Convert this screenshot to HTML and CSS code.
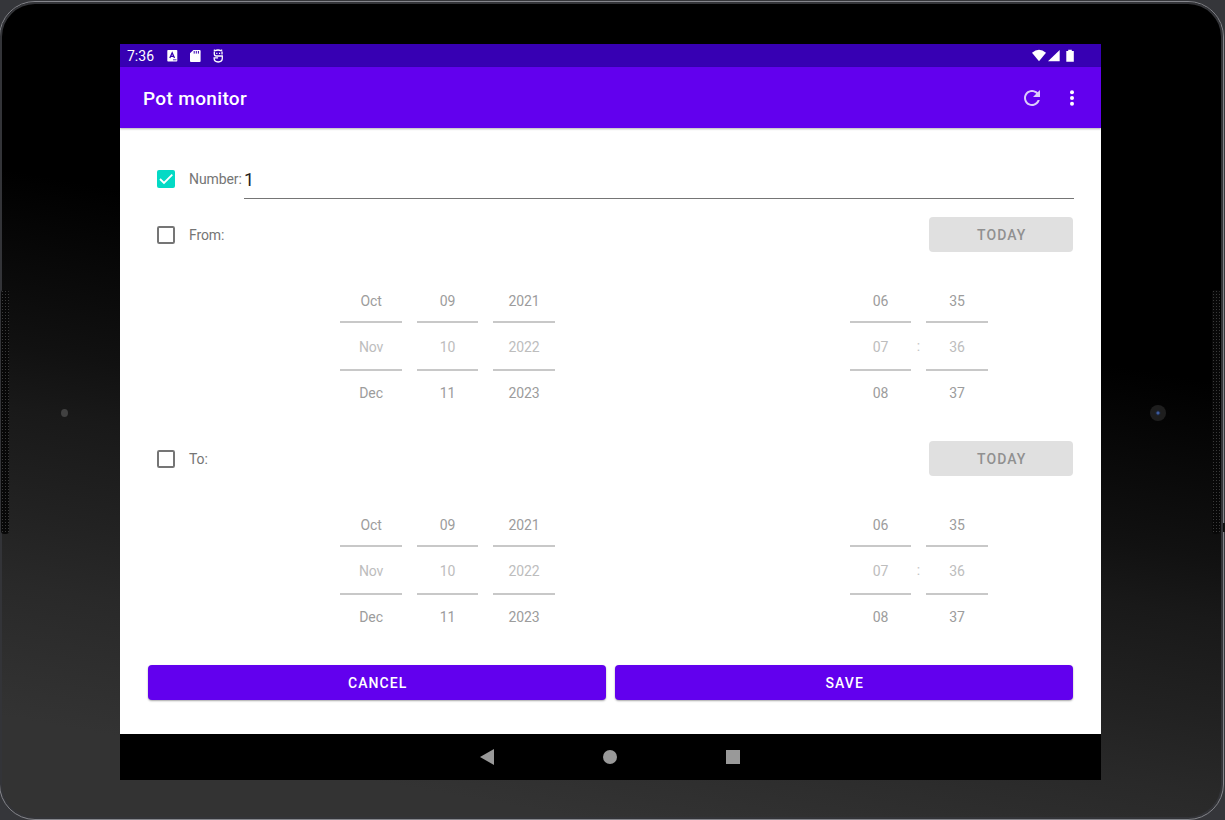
FILE: index.html
```html
<!DOCTYPE html>
<html lang="en">
<head>
<meta charset="utf-8">
<title>Pot monitor</title>
<link rel="stylesheet" href="styles.css">
</head>
<body>
<div class="device">
  <div class="bezel"></div>
  <div class="speaker speaker-left"></div>
  <div class="speaker speaker-right"></div>
  <div class="sensor"></div>
  <div class="camera"></div>
  <div class="power"></div>
  <main class="screen">
    <div class="status">
      <span class="clock">7:36</span>
      <svg class="status-icons" width="58" height="14" viewBox="0 0 58 14">
        <rect x="0.3" y="1" width="10" height="11.5" rx="0.8" fill="#fff"/>
        <path d="M2.8 9 5.2 3.8 7.5 9M3.6 7.3h3.2" fill="none" stroke="#3700b3" stroke-width="1.3"/>
        <path d="M6 10.8h3.5" stroke="#3700b3" stroke-width=".8"/>
        <path d="M23 4.2 26.4 1h6.2q1 0 1 1v10q0 1-1 1H24q-1 0-1-1z" fill="#fff"/>
        <path d="M27.2 2v2.6M29.3 2v2.6M31.4 2v2.6" stroke="#3700b3" stroke-width="1"/>
        <path d="M46.8.8 48.1 1.7Q51 .3 53.9 1.7L55.2.8M47.3 2.5v2.3Q47.3 7 49.3 7h6v2.3q0 3.7-4.1 3.7T47.1 9.3V8.8h4M55 2.5v3M49.2 4.3h1.2M52 4.3h1.2" fill="none" stroke="#fff" stroke-width="1.3"/>
      </svg>
      <svg class="signal" width="44" height="14" viewBox="0 0 44 14">
        <path d="M0 3.7Q7-2 14 3.7L7 12.3z" fill="#fff"/>
        <path d="M27.7 1v11.3H16z" fill="#fff"/>
        <path d="M34.3 2h1.9V.8h3.6V2h2v10.8h-7.5z" fill="#fff"/>
      </svg>
    </div>
    <header class="appbar">
      <h1 class="title">Pot monitor</h1>
      <svg class="refresh" width="16" height="16" viewBox="4 4 16 16"><path fill="#dccbfb" d="M17.65 6.35C16.2 4.9 14.21 4 12 4c-4.42 0-7.99 3.58-7.99 8s3.57 8 7.99 8c3.73 0 6.84-2.55 7.73-6h-2.08c-.82 2.33-3.04 4-5.65 4-3.31 0-6-2.69-6-6s2.69-6 6-6c1.66 0 3.14.69 4.22 1.78L13 11h7V4l-2.35 2.35z"/></svg>
      <svg class="more" width="6" height="16" viewBox="0 0 6 16" fill="#fff"><circle cx="3" cy="2.2" r="2"/><circle cx="3" cy="8" r="2"/><circle cx="3" cy="13.8" r="2"/></svg>
    </header>
    <section class="content">
      <div class="row number-row">
        <svg class="box" width="18" height="18" viewBox="0 0 18 18"><rect width="18" height="18" rx="2" fill="#03dac5"/><path d="m3 9 4 4 8.3-8.3" fill="none" stroke="#fff" stroke-width="1.8"/></svg>
        <span class="label">Number:</span>
        <div class="field">1</div>
      </div>
      <div class="row">
        <svg class="box" width="18" height="18" viewBox="0 0 18 18"><rect x="1" y="1" width="16" height="16" rx="1.2" fill="none" stroke="#757575" stroke-width="2"/></svg>
        <span class="label">From:</span>
        <div class="button today">TODAY</div>
      </div>
      <div class="pickers">
        <div class="wheel"><span>Oct</span><span class="current">Nov</span><span>Dec</span></div>
        <div class="wheel"><span>09</span><span class="current">10</span><span>11</span></div>
        <div class="wheel"><span>2021</span><span class="current">2022</span><span>2023</span></div>
        <div class="wheel hour"><span>06</span><span class="current">07</span><span>08</span></div>
        <div class="colon">:</div>
        <div class="wheel"><span>35</span><span class="current">36</span><span>37</span></div>
      </div>
      <div class="row">
        <svg class="box" width="18" height="18" viewBox="0 0 18 18"><rect x="1" y="1" width="16" height="16" rx="1.2" fill="none" stroke="#757575" stroke-width="2"/></svg>
        <span class="label">To:</span>
        <div class="button today">TODAY</div>
      </div>
      <div class="pickers">
        <div class="wheel"><span>Oct</span><span class="current">Nov</span><span>Dec</span></div>
        <div class="wheel"><span>09</span><span class="current">10</span><span>11</span></div>
        <div class="wheel"><span>2021</span><span class="current">2022</span><span>2023</span></div>
        <div class="wheel hour"><span>06</span><span class="current">07</span><span>08</span></div>
        <div class="colon">:</div>
        <div class="wheel"><span>35</span><span class="current">36</span><span>37</span></div>
      </div>
      <div class="actions">
        <div class="button primary">CANCEL</div>
        <div class="button primary">SAVE</div>
      </div>
    </section>
    <nav class="navbar">
      <svg width="14" height="16" viewBox="0 0 14 16"><path d="M0 8 14 0v16z" fill="#999"/></svg>
      <svg width="14" height="14" viewBox="0 0 14 14"><circle cx="7" cy="7" r="7" fill="#999"/></svg>
      <svg width="14" height="14" viewBox="0 0 14 14"><path d="M0 0h14v14H0z" fill="#999"/></svg>
    </nav>
  </main>
</div>
</body>
</html>
```
FILE: styles.css
```css
* { box-sizing: border-box; }
body { margin: 0; background: #35363a; font-family: Roboto, sans-serif; }
.device {
  position: relative;
  width: 1225px;
  height: 820px;
  padding: 44px 124px 40px 120px;
  overflow: hidden;
}
.bezel {
  position: absolute;
  inset: 1px 1px 0 -1px;
  border: 1px solid #85868c;
  border-radius: 36px;
  box-shadow: inset 0 0 0 2px #333438;
  background: linear-gradient(190deg, #000 37%, #0a0a0a 47%, #111 54%, #191919 60%, #222 70%, #292929 77%, #333 90%);
}
.speaker {
  position: absolute;
  top: 290px;
  width: 8px;
  height: 244px;
  border-radius: 3px;
  background: radial-gradient(circle, #3a3a3a 0.6px, #080808 1px) 0 0 / 3px 3px;
}
.speaker-left { left: 1px; }
.speaker-right { left: 1212px; }
.sensor {
  position: absolute;
  left: 61px;
  top: 409px;
  width: 7px;
  height: 8px;
  border-radius: 50%;
  background: #414141;
}
.camera {
  position: absolute;
  left: 1150px;
  top: 405px;
  width: 16px;
  height: 16px;
  border-radius: 50%;
  background: radial-gradient(circle, #3c5a9c 1px, #1c2538 2px, #1e1e1e 3px);
}
.power { position: absolute; left: 1223px; top: 523px; width: 2px; height: 9px; background: #111; }
.screen { position: relative; width: 981px; height: 736px; background: #fff; }
.status {
  display: flex;
  align-items: center;
  height: 23px;
  padding: 0 25px 0 7px;
  background: #3700b3;
  color: #fff;
}
.clock { width: 40px; font-size: 14px; line-height: 23px; padding-top: 1px; }
.signal { margin-left: auto; }
.appbar {
  display: flex;
  align-items: center;
  height: 61px;
  padding: 0 26px 0 23px;
  background: #6200ee;
  color: #fff;
  box-shadow: 0 1px 2px rgba(0, 0, 0, 0.3);
}
.title { flex: 1; margin: 0; padding-top: 2px; font-size: 19px; font-weight: 500; letter-spacing: 0.35px; }
.more { margin-left: 29px; }
.content { height: 606px; padding: 30px 28px 0; }
.row {
  display: flex;
  align-items: center;
  height: 35px;
  padding-left: 9px;
}
.number-row { height: 41px; margin-bottom: 18px; }
.label { margin-left: 14px; color: #757575; font-size: 14px; letter-spacing: -0.1px; padding-top: 1px; }
.number-row .label { width: 55px; }
.field {
  flex: 1;
  height: 41px;
  margin-right: -1px;
  border-bottom: 1px solid #757575;
  color: #222;
  font-size: 18px;
  line-height: 43px;
}
.button {
  height: 35px;
  border-radius: 4px;
  font-size: 14px;
  font-weight: 500;
  line-height: 36px;
  letter-spacing: 1.1px;
  text-align: center;
  text-indent: 1.5px;
}
.today { width: 144px; margin-left: auto; background: #e0e0e0; color: #909090; }
.pickers {
  display: flex;
  height: 189px;
  padding: 26px 0 0 192px;
  color: #9c9c9c;
  font-size: 14px;
  letter-spacing: -0.1px;
  text-align: center;
}
.wheel { display: grid; grid-template-rows: 43px 50px 43px; align-content: start; width: 61.5px; margin-right: 15px; text-indent: 0.7px; }
.wheel span { line-height: 46px; }
.wheel span:last-child { line-height: 44px; }
.wheel .current {
  border-top: 2px solid #c8c8c8;
  border-bottom: 2px solid #c8c8c8;
  color: #bdbdbd;
  line-height: 48px;
}
.hour { margin-left: 280px; margin-right: 0; }
.colon { width: 15px; padding-top: 60px; color: #c4c4c4; }
.actions { display: flex; gap: 9px; }
.primary { flex: 1; background: #6200ee; color: #fff; box-shadow: 0 1px 2px rgba(0, 0, 0, 0.35); }
.navbar {
  display: flex;
  align-items: center;
  justify-content: center;
  gap: 109px;
  height: 46px;
  padding-right: 1px;
  background: #000;
}
```
